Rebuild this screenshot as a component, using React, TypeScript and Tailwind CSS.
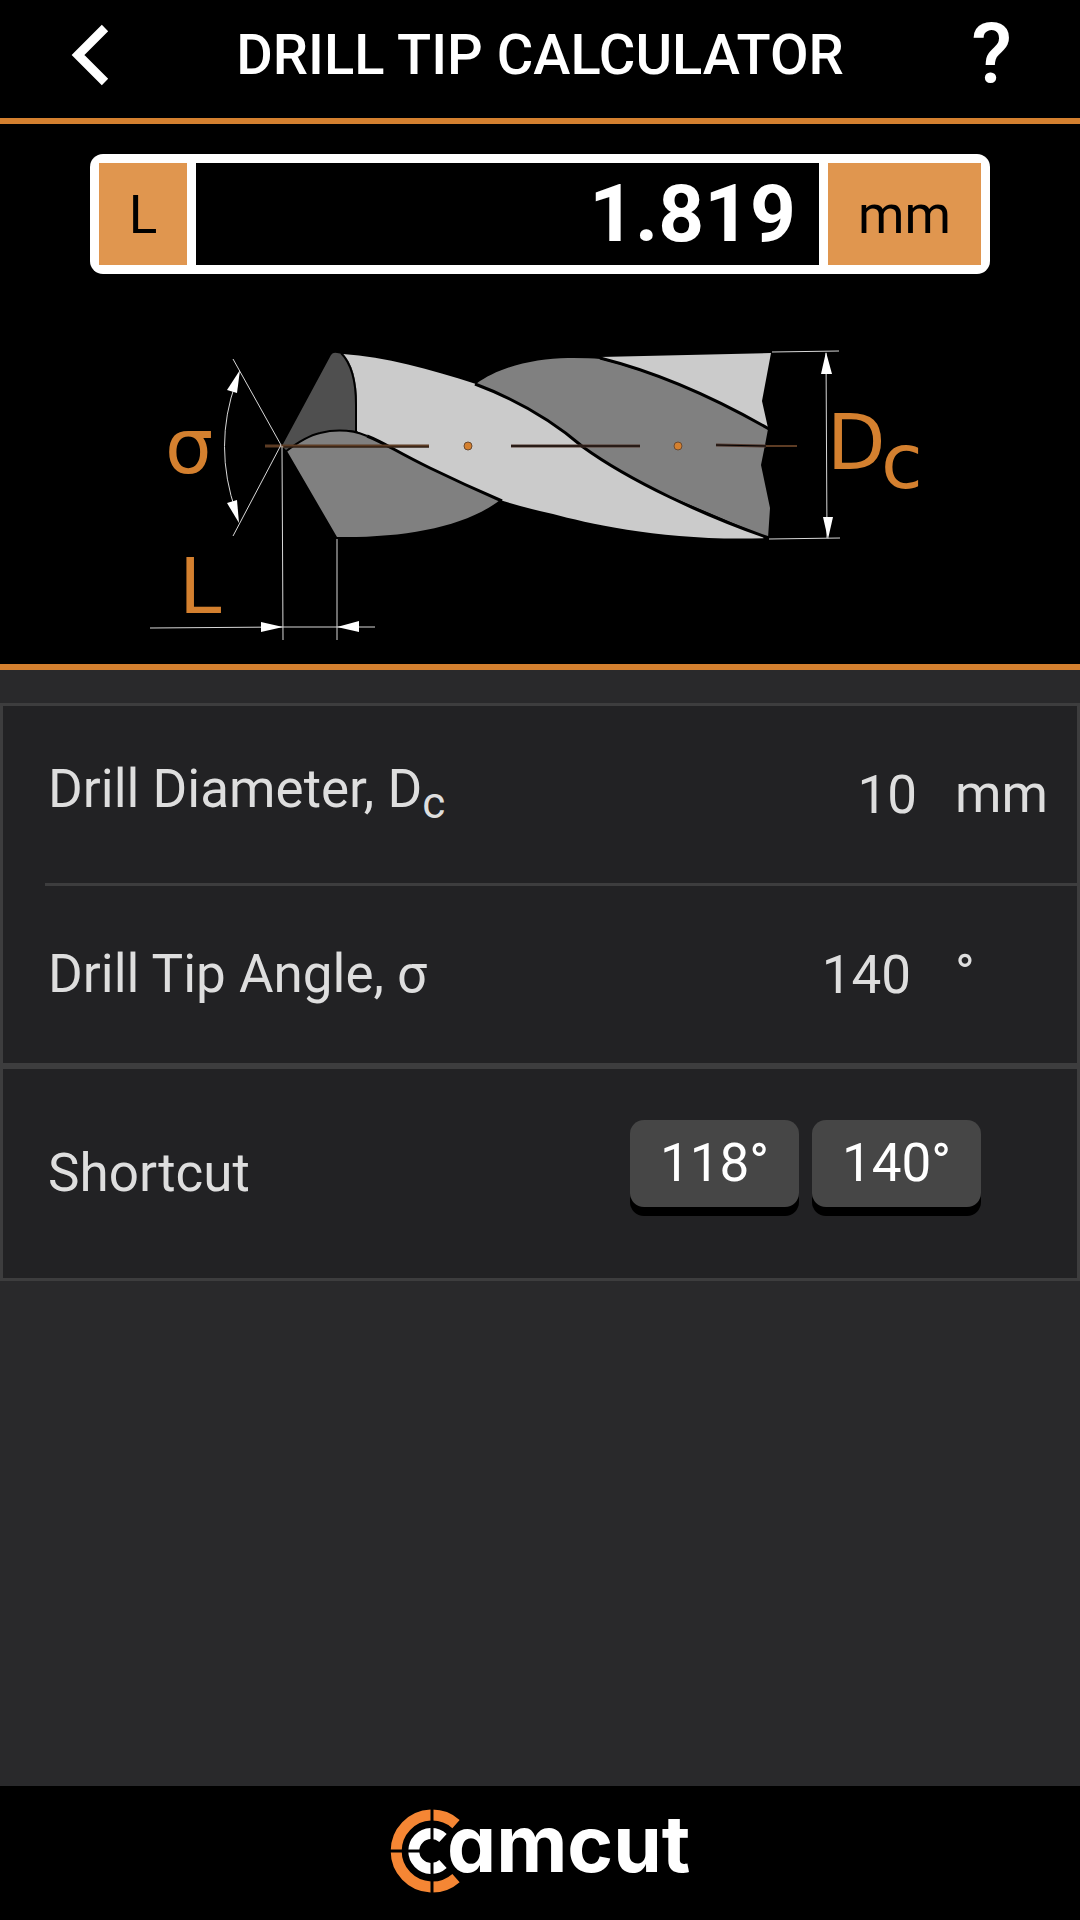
import React, { useState } from 'react';

interface ParameterRowProps {
  id: string;
  label: React.ReactNode;
  value: string;
  unit: string;
  unitGap: string;
  onChange: (value: string) => void;
}

const ParameterRow: React.FC<ParameterRowProps> = ({ id, label, value, unit, unitGap, onChange }) => (
  <div className="flex h-[177px] items-center pl-[3px]">
    <label htmlFor={id} className="flex-1 whitespace-nowrap">
      {label}
    </label>
    <input
      id={id}
      type="text"
      inputMode="decimal"
      value={value}
      onChange={e => onChange(e.target.value)}
      className="w-48 bg-transparent text-right outline-none"
    />
    <span className={`w-[122px] ${unitGap}`}>{unit}</span>
  </div>
);

const DrillDiagram: React.FC = () => (
  <svg viewBox="0 0 1080 390" className="block w-full" role="img" aria-label="Drill tip dimensions">
    <g transform="translate(0 -274)">
      {/* flutes and lands */}
      <path d="M282 446 L331 355 Q333 352 337 353 L343 354 Q357 368 357 405 L357 431 Q320 425 287 451 Z" fill="#4f4f4f" />
      <path
        d="M287 451 Q306 436 320 433 Q345 427 367 436 C385 443 395 451 430 468 Q465 485 500 500 C465 527 405 538 337 537 Z"
        fill="#808080"
      />
      <path
        d="M476 384 C500 366 540 357 573 358 Q590 358 600 359 C660 374 715 399 768 429 L765 445 L761 465 L770 508 L768 538 L620 475 L560 430 Z"
        fill="#808080"
      />
      <path d="M600 357 L771 353 L762 401 L768 428 C715 398 660 373 600 357 Z" fill="#cbcbcb" />
      <path
        d="M343 354 C385 357 430 369 476 384 C515 399 553 421 583 447 C630 481 705 516 768 538 C670 542 590 524 553 514 Q525 508 500 500 Q465 485 430 468 C395 451 385 443 367 436 Q358 432 357 431 L357 405 Q357 368 343 354 Z"
        fill="#cbcbcb"
      />

      {/* edges between the flutes */}
      <g fill="none" stroke="#000" strokeWidth="3">
        <path d="M341 353 Q356 368 356 405 L356 431" strokeWidth="2" />
        <path d="M285 452 Q306 436 320 433 Q345 427 367 436" strokeWidth="2" />
        <path d="M367 436 C385 443 395 451 430 468 Q465 485 502 501" />
        <path d="M475 384 C515 399 553 421 583 447 C630 481 705 516 769 538" />
        <path d="M600 358 C660 373 715 398 769 429" />
      </g>

      {/* centre line */}
      <path d="M265 446 L429 446" stroke="#5d3c24" strokeWidth="3" />
      <path d="M284 447 L429 447" stroke="#1d130c" strokeWidth="1" />
      <path d="M511 446 L640 446 M716 445 L766 446" stroke="#52392f" strokeWidth="3" />
      <path d="M511 446 L640 446 M716 445 L766 446" stroke="#000" strokeWidth="1" />
      <path d="M766 446 L797 446" stroke="#5d3c24" strokeWidth="2" />
      <g fill="#d4802f" stroke="#6b4a30" strokeWidth="1">
        <circle cx="468" cy="446" r="4" />
        <circle cx="678" cy="446" r="4" />
      </g>

      {/* dimension lines */}
      <g fill="none" stroke="#d8d8d8" strokeWidth="1">
        <path d="M233 359 L281 445 L233 536" />
        <path d="M236 382 Q213 446 236 512" />
        <path d="M282 446 L283 640 M337 539 L337 640" />
        <path d="M150 628 L283 627 L375 627" />
        <path d="M772 352 L839 351 M769 539 L840 538 M826 353 L827 538" />
      </g>
      <g fill="#fff">
        <path d="M240 370 L227 390 L237 393 Z" />
        <path d="M239 523 L227 503 L237 500 Z" />
        <path d="M283 627 L261 622 L261 632 Z" />
        <path d="M337 627 L359 621 L359 632 Z" />
        <path d="M826 352 L821 374 L832 374 Z" />
        <path d="M828 539 L823 517 L833 517 Z" />
      </g>

      <g fill="#d4802f" className="font-['DejaVu_Sans',sans-serif] text-[76px]">
        <text x="165" y="473">σ</text>
        <text x="179" y="613">L</text>
        <text x="827" y="469">
          D<tspan x="881" dy="19">c</tspan>
        </text>
      </g>
    </g>
  </svg>
);

const CamcutLogo: React.FC = () => (
  <svg viewBox="0 0 306 134" className="h-[134px]" role="img" aria-label="camcut">
    <path d="M69 38 A36 36 0 1 0 69 92" fill="none" stroke="#f58634" strokeWidth="11" />
    <path d="M56 52 A17.500 17.500 0 1 0 56 78" fill="none" stroke="#fff" strokeWidth="11" />
    <path d="M45 20 V110 M0 65 H33" stroke="#000" strokeWidth="3" />
    <text
      x="60"
      y="86"
      fill="#fff"
      className="font-['Inter',sans-serif] text-[78px] font-bold [font-feature-settings:'cv11'_1,'ss01'_1]"
    >
      amcut
    </text>
  </svg>
);

const shortcuts = ['118', '140'];

const App: React.FC = () => {
  const [diameter, setDiameter] = useState('10');
  const [angle, setAngle] = useState('140');

  const tip = Number(diameter) / 2 / Math.tan((Number(angle) * Math.PI) / 360);
  const length = Number.isFinite(tip) ? (Math.floor(tip * 1000) / 1000).toFixed(3) : '-';

  return (
    <div className="flex min-h-screen flex-col bg-[#29292b] font-['Roboto',sans-serif] text-[53px] leading-none text-[#dedede]">
      <header className="flex h-[124px] items-center justify-between border-b-6 border-[#d4802f] bg-black px-[68px] pb-2 text-white">
        <button type="button" aria-label="Back" className="w-12">
          <svg viewBox="0 0 48 64" className="h-16 w-12" fill="none" stroke="currentColor" strokeWidth="9">
            <path d="M37 5 L10 32 L37 59" />
          </svg>
        </button>
        <h1 className="text-[56px] font-medium whitespace-nowrap">DRILL TIP CALCULATOR</h1>
        <button type="button" aria-label="Help" className="w-12 text-right text-[84px] font-medium">
          ?
        </button>
      </header>

      <section className="border-b-6 border-[#d4802f] bg-black pt-[30px]">
        <div className="mx-[90px] flex h-[120px] gap-[9px] rounded-[13px] bg-white p-[9px] text-black">
          <label htmlFor="length" className="flex w-[88px] items-center justify-center bg-[#e0964f] pt-0.5">
            L
          </label>
          <output
            id="length"
            className="flex flex-1 items-center justify-end bg-black pr-[23px] text-[80px] font-bold text-white"
          >
            {length}
          </output>
          <span className="flex w-[153px] items-center justify-center bg-[#e0964f] pt-0.5">mm</span>
        </div>
        <DrillDiagram />
      </section>

      <main className="flex-1 pt-[33px]">
        <div className="border-3 border-[#3d3d3e] bg-[#222224]">
          <div className="pl-[42px]">
            <ParameterRow
              id="diameter"
              label={
                <span className="block pb-2.5">
                  Drill Diameter, D<sub className="text-[44px]">c</sub>
                </span>
              }
              value={diameter}
              unit="mm"
              unitGap="ml-[38px]"
              onChange={setDiameter}
            />
            <div className="h-[3px] bg-[#3d3d3e]" />
            <ParameterRow
              id="angle"
              label="Drill Tip Angle, σ"
              value={angle}
              unit="°"
              unitGap="ml-11"
              onChange={setAngle}
            />
          </div>
          <div className="flex h-[215px] items-center justify-between border-t-6 border-[#3d3d3e] pr-24 pl-[45px]">
            <span>Shortcut</span>
            <div className="flex gap-[13px] pb-5">
              {shortcuts.map(s => (
                <button
                  key={s}
                  type="button"
                  onClick={() => setAngle(s)}
                  className="h-[87px] w-[169px] rounded-[14px] bg-[#464646] text-white shadow-[0_9px_0_#000]"
                >
                  {s}°
                </button>
              ))}
            </div>
          </div>
        </div>
      </main>

      <footer className="flex h-[134px] items-center justify-center bg-black">
        <CamcutLogo />
      </footer>
    </div>
  );
};

export default App;
